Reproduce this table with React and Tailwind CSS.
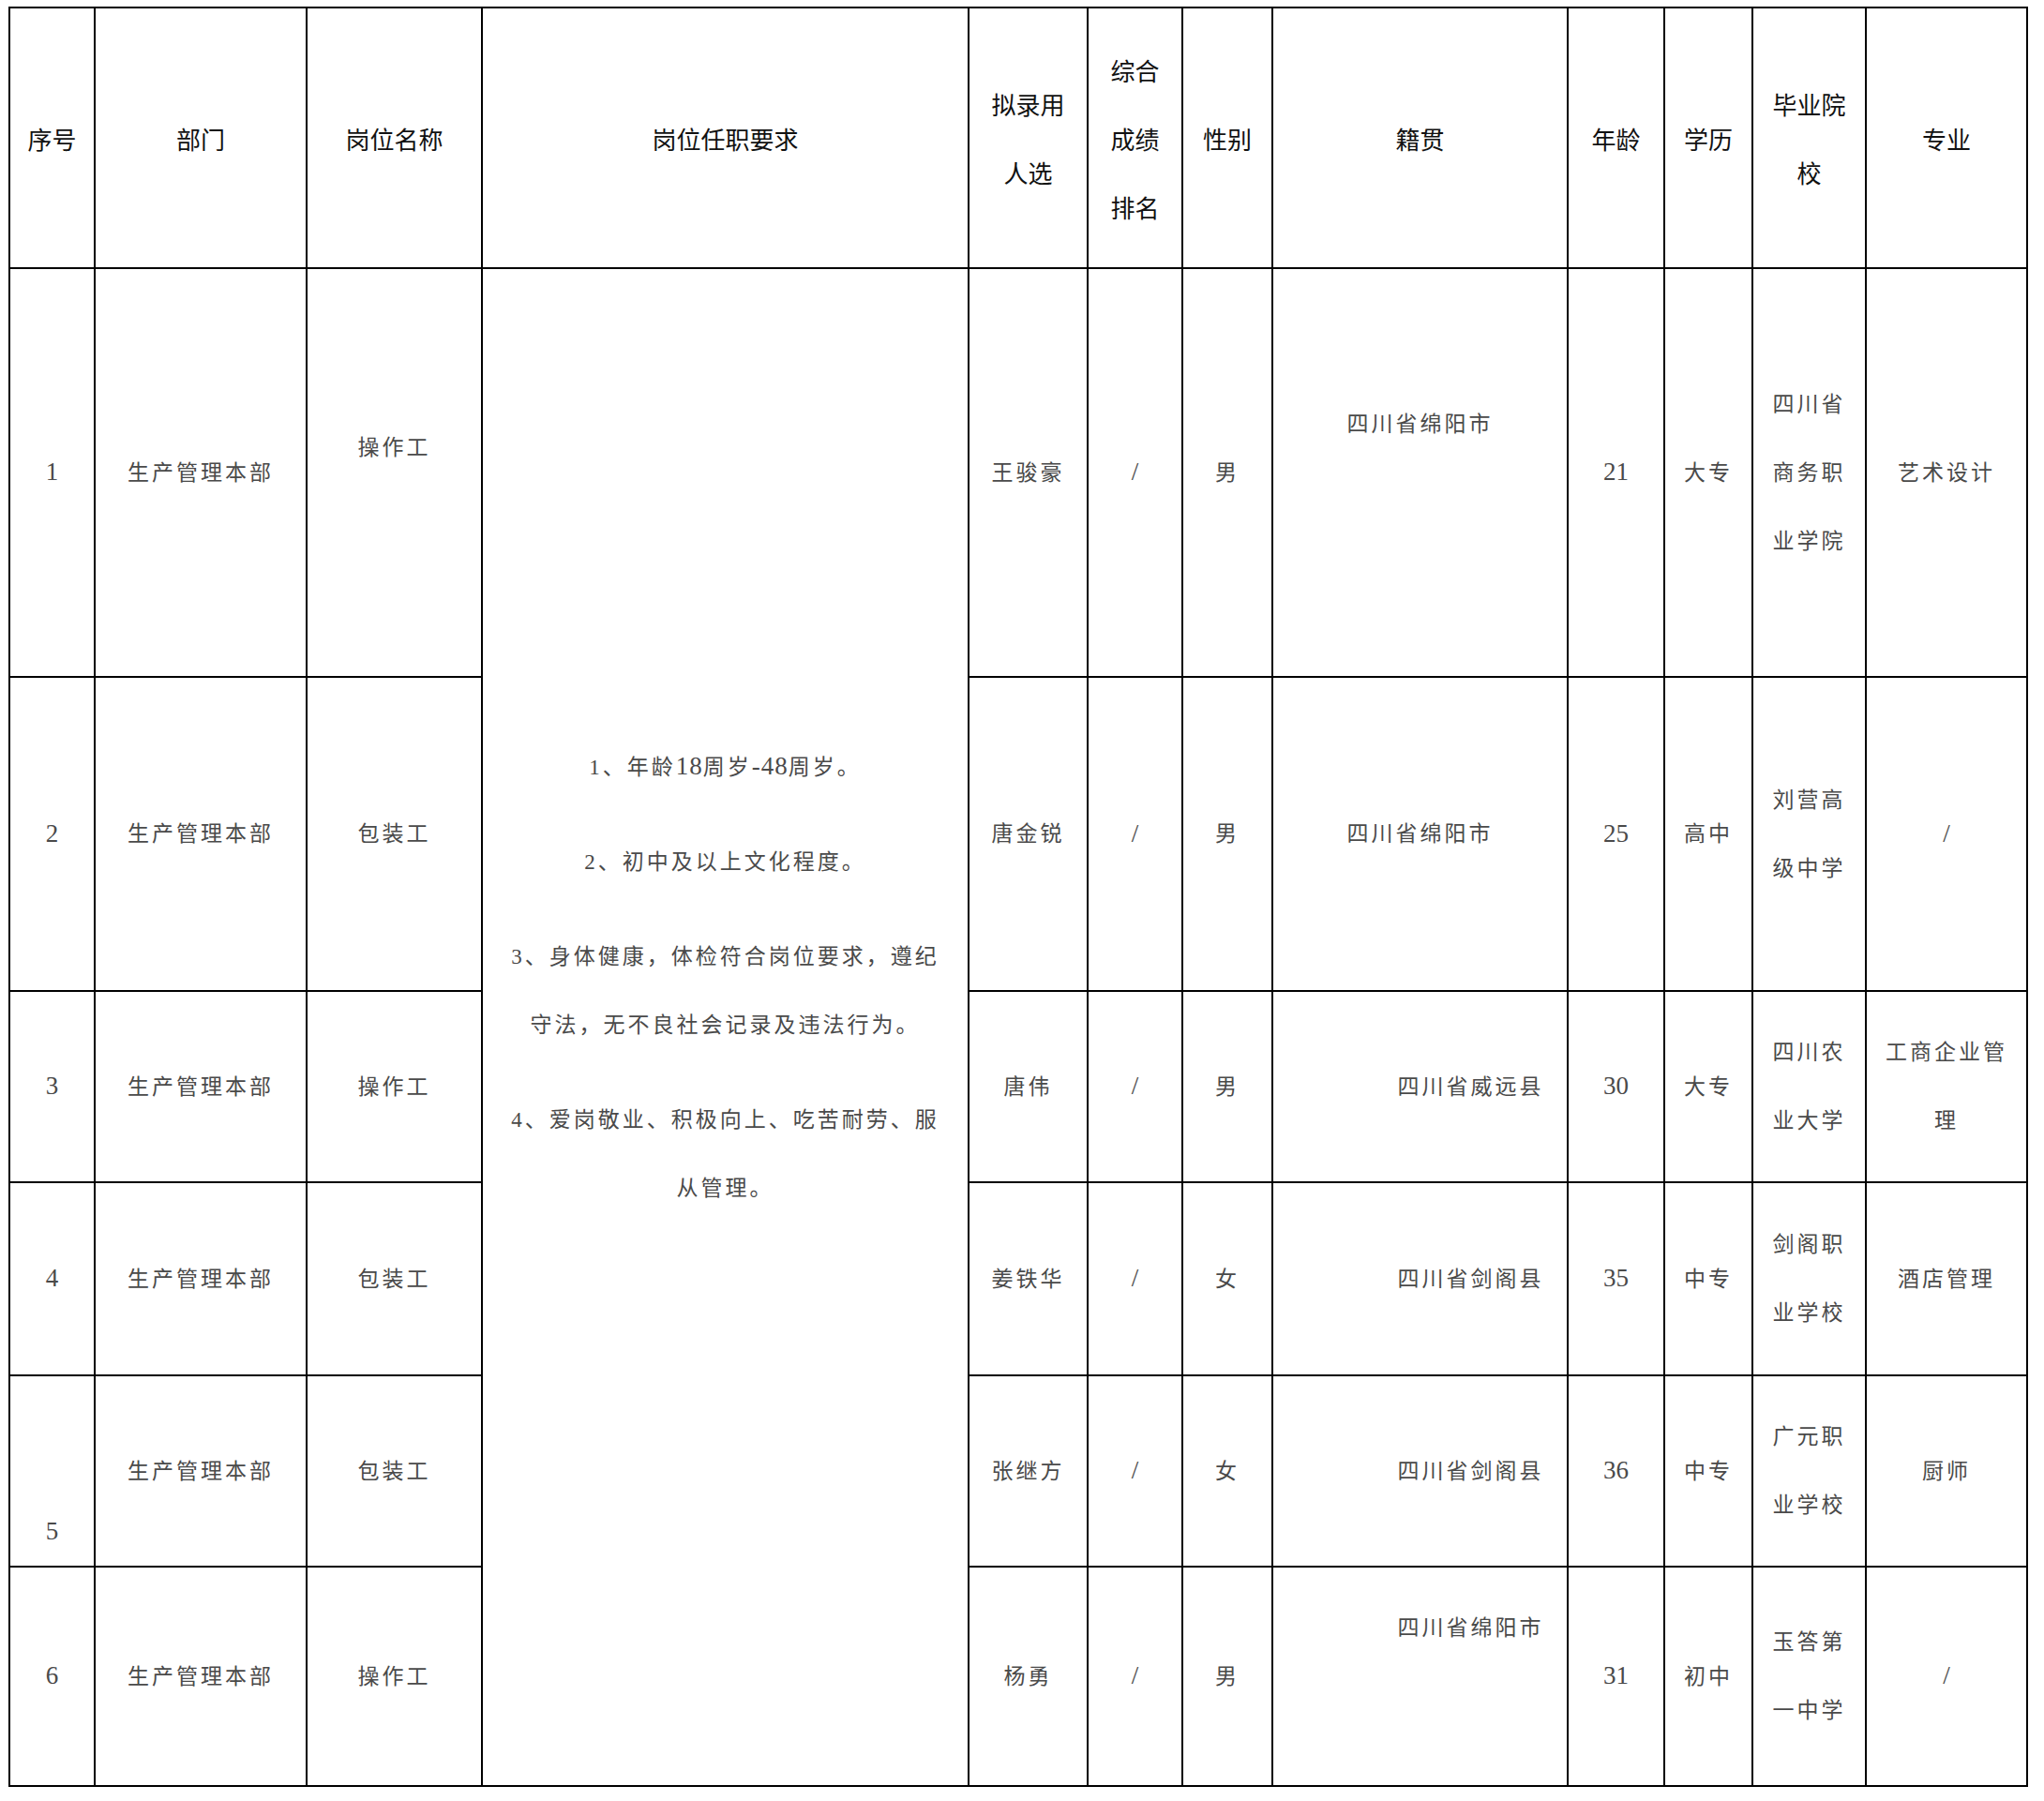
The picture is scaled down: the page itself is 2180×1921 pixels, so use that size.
import React from "react";

const H = "font-['Noto_Sans_CJK_SC',sans-serif] text-[26px] leading-[73px] text-[#111]";
const B = "font-['Liberation_Serif','Noto_Sans_CJK_SC',serif] text-[23px] tracking-[3px] leading-[73px] text-[#4a4a4a]";
const NUM = "text-[27px] tracking-[0px]";

function Cell({ children, className = "" }) {
  return (
    <div className={`border-r-2 border-b-2 border-black flex items-center justify-center text-center ${className}`}>
      <div>{children}</div>
    </div>
  );
}

function Lines({ text }) {
  if (text === "/") return <span className={NUM}>/</span>;
  const parts = text.split("/");
  return (
    <>
      {parts.map((p, i) => (
        <React.Fragment key={i}>
          {i > 0 && <br />}
          {p}
        </React.Fragment>
      ))}
    </>
  );
}

const rows = [
  {
    n: "1", seqCls: "", dept: "生产管理本部", job: "操作工", jobCls: "pb-[54px]", name: "王骏豪", sex: "男",
    home: "四川省绵阳市", homeCls: "pb-[104px]", age: "21", edu: "大专", school: "四川省/商务职/业学院", major: "艺术设计",
  },
  {
    n: "2", seqCls: "", dept: "生产管理本部", job: "包装工", jobCls: "", name: "唐金锐", sex: "男",
    home: "四川省绵阳市", homeCls: "", age: "25", edu: "高中", school: "刘营高/级中学", major: "/",
  },
  {
    n: "3", seqCls: "", dept: "生产管理本部", job: "操作工", jobCls: "", name: "唐伟", sex: "男",
    home: "四川省威远县", homeCls: "pl-[108px]", age: "30", edu: "大专", school: "四川农/业大学", major: "工商企业管/理",
  },
  {
    n: "4", seqCls: "", dept: "生产管理本部", job: "包装工", jobCls: "", name: "姜铁华", sex: "女",
    home: "四川省剑阁县", homeCls: "pl-[108px]", age: "35", edu: "中专", school: "剑阁职/业学校", major: "酒店管理",
  },
  {
    n: "5", seqCls: "pt-[129px]", dept: "生产管理本部", job: "包装工", jobCls: "", name: "张继方", sex: "女",
    home: "四川省剑阁县", homeCls: "pl-[108px]", age: "36", edu: "中专", school: "广元职/业学校", major: "厨师",
  },
  {
    n: "6", seqCls: "", dept: "生产管理本部", job: "操作工", jobCls: "", name: "杨勇", sex: "男",
    home: "四川省绵阳市", homeCls: "pl-[108px] pb-[103px]", age: "31", edu: "初中", school: "玉答第/一中学", major: "/",
  },
];

export default function App() {
  return (
    <div className="bg-white w-[2180px] h-[1921px] pt-[7px] pl-[9px]">
      <div className="grid w-fit border-l-2 border-t-2 border-black grid-cols-[91px_226px_187px_519px_127px_101px_96px_315px_103px_94px_121px_172px] grid-rows-[278px_436px_335px_204px_206px_204px_234px]">
        <Cell className={H}>序号</Cell>
        <Cell className={H}>部门</Cell>
        <Cell className={H}>岗位名称</Cell>
        <Cell className={H}>岗位任职要求</Cell>
        <Cell className={H}>拟录用<br />人选</Cell>
        <Cell className={H}>综合<br />成绩<br />排名</Cell>
        <Cell className={H}>性别</Cell>
        <Cell className={H}>籍贯</Cell>
        <Cell className={H}>年龄</Cell>
        <Cell className={H}>学历</Cell>
        <Cell className={H}>毕业院<br />校</Cell>
        <Cell className={H}>专业</Cell>

        {rows.map((r, i) => (
          <React.Fragment key={r.n}>
            <Cell className={`${B} ${r.seqCls}`}><span className={NUM}>{r.n}</span></Cell>
            <Cell className={B}>{r.dept}</Cell>
            <Cell className={`${B} ${r.jobCls}`}>{r.job}</Cell>
            {i === 0 && (
              <div className={`row-span-6 border-r-2 border-b-2 border-black flex flex-col items-center justify-start text-center pt-[494px] whitespace-nowrap ${B}`}>
                <p className="mb-[28px]">1、年龄<span className="text-[27px] tracking-[1px]">18</span>周岁<span className="text-[27px] tracking-[1px]">-48</span>周岁。</p>
                <p className="mb-[28px]">2、初中及以上文化程度。</p>
                <p className="mb-[28px]">3、身体健康，体检符合岗位要求，遵纪<br />守法，无不良社会记录及违法行为。</p>
                <p>4、爱岗敬业、积极向上、吃苦耐劳、服<br />从管理。</p>
              </div>
            )}
            <Cell className={B}>{r.name}</Cell>
            <Cell className={B}><span className={NUM}>/</span></Cell>
            <Cell className={B}>{r.sex}</Cell>
            <Cell className={`${B} ${r.homeCls}`}>{r.home}</Cell>
            <Cell className={B}><span className={NUM}>{r.age}</span></Cell>
            <Cell className={B}>{r.edu}</Cell>
            <Cell className={B}><Lines text={r.school} /></Cell>
            <Cell className={B}><Lines text={r.major} /></Cell>
          </React.Fragment>
        ))}
      </div>
    </div>
  );
}
